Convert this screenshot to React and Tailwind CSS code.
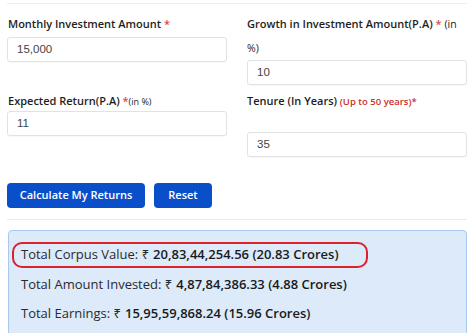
import React from 'react';

const font = { fontFamily: '"Open Sans", "Noto Sans", sans-serif' };

function Field({ value }) {
  return (
    <div
      className="h-[25px] border border-[#dfe2e6] rounded-[3px] bg-white flex items-center pl-[9px] text-[11.5px] text-[#444] shadow-[0_1px_1px_rgba(0,0,0,0.03)]"
      style={{ fontFamily: '"Liberation Sans", Arial, sans-serif' }}
    >
      {value}
    </div>
  );
}

function Row({ label, amount, circled }) {
  return (
    <div className={`h-[26px] flex items-center whitespace-nowrap px-[7px] rounded-[10px] border-[2px] ${circled ? 'border-[#d8232a] w-[356px]' : 'border-transparent'}`}>
      <span className="text-[13px] text-[#2a2a2a]">{label}</span>
      <span className="text-[13px] font-semibold text-[#1a1a1a] ml-[4px]">{amount}</span>
    </div>
  );
}

export default function App() {
  return (
    <div className="w-[474px] h-[333px] overflow-hidden bg-white px-[7px] pt-[3px]" style={font}>
      <div className="border-t border-[#eceef0]" />

      <div className="grid grid-cols-2 gap-x-[20px] mt-[8px]">
        <div>
          <p className="text-[11px] leading-[23px] font-semibold text-[#1e1e1e] pl-[1px]">
            Monthly Investment Amount <span className="text-[#e04848]">*</span>
          </p>
          <div className="mt-[2px]"><Field value="15,000" /></div>
        </div>
        <div>
          <p className="text-[11px] leading-[23px] font-semibold text-[#1e1e1e]">
            Growth in Investment Amount(P.A) <span className="text-[#e04848]">*</span>{' '}
            <span className="font-normal text-[10.5px]">(in</span>
            <br />
            <span className="font-normal text-[10.5px]">%)</span>
          </p>
          <Field value="10" />
        </div>

        <div className="mt-[5px]">
          <p className="text-[11px] leading-[22px] font-semibold text-[#1e1e1e] pl-[1px]">
            Expected Return(P.A) <span className="text-[#e04848]">*</span>
            <span className="font-normal text-[9px]">(in %)</span>
          </p>
          <div className="-mt-[2px]"><Field value="11" /></div>
        </div>
        <div className="mt-[5px]">
          <p className="text-[11px] leading-[22px] font-semibold text-[#1e1e1e]">
            Tenure (In Years) <span className="text-[9.5px] text-[#c9302c]">(Up to 50 years)*</span>
          </p>
          <div className="mt-[19px]"><Field value="35" /></div>
        </div>
      </div>

      <div className="flex gap-[9px] mt-[26px]">
        <button className="h-[25px] w-[138px] rounded-[4px] bg-[#0a4fc9] text-white text-[11px] font-semibold">
          Calculate My Returns
        </button>
        <button className="h-[25px] w-[58px] rounded-[4px] bg-[#0a4fc9] text-white text-[11px] font-semibold">
          Reset
        </button>
      </div>

      <div className="border-t border-[#e8eaed] mt-[11px]" />

      <div className="mt-[10px] ml-[1px] h-[120px] bg-[#dceafa] border border-[#a9c8ee] rounded-[4px] pt-[11px] pl-[3px]">
        <div className="flex flex-col gap-[3.5px]">
          <Row label="Total Corpus Value: ₹" amount="20,83,44,254.56 (20.83 Crores)" circled />
          <Row label="Total Amount Invested: ₹" amount="4,87,84,386.33 (4.88 Crores)" />
          <Row label="Total Earnings: ₹" amount="15,95,59,868.24 (15.96 Crores)" />
        </div>
      </div>
    </div>
  );
}
